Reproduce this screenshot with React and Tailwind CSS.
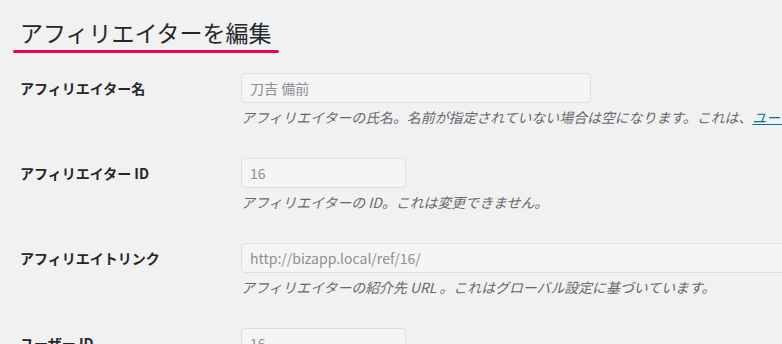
import React from 'react'

const FONT = { fontFamily: '"Noto Sans CJK JP", "Noto Sans", sans-serif' }

const rows = [
  {
    label: 'アフィリエイター名',
    value: '刀吉 備前',
    width: 'w-[350px]',
    desc: (
      <>
        アフィリエイターの氏名。名前が指定されていない場合は空になります。これは、
        <a href="#" className="text-[#0073aa] underline">ユーザー</a>
      </>
    ),
  },
  {
    label: 'アフィリエイター ID',
    value: '16',
    width: 'w-[165px]',
    desc: 'アフィリエイターの ID。これは変更できません。',
  },
  {
    label: 'アフィリエイトリンク',
    value: 'http://bizapp.local/ref/16/',
    width: 'w-[600px]',
    desc: 'アフィリエイターの紹介先 URL 。これはグローバル設定に基づいています。',
  },
  {
    label: 'ユーザー ID',
    value: '16',
    width: 'w-[165px]',
    desc: '',
  },
]

function Row({ label, value, width, desc }) {
  return (
    <div className="flex h-[85px] pt-[15px]">
      <div className="flex h-[30px] w-[221px] shrink-0 items-center text-[14px] font-bold text-[#23282d]">
        {label}
      </div>
      <div className="flex flex-col whitespace-nowrap">
        <div
          className={`flex h-[30px] items-center rounded-[4px] border border-[#dedede] bg-[#f5f5f5] px-2 text-[14px] text-[#8c8f94] ${width}`}
        >
          {value}
        </div>
        {desc ? <p className="mt-[4px] text-[13.9px] italic text-[#646970]">{desc}</p> : null}
      </div>
    </div>
  )
}

export default function App() {
  return (
    <div className="h-[344px] overflow-hidden bg-[#f1f1f1]" style={FONT}>
      <div className="pl-[13px] pt-[17px]">
        <div className="inline-flex flex-col">
          <h1 className="px-[7px] text-[23px] font-normal leading-[30px] text-[#23282d]">
            アフィリエイターを編集
          </h1>
          <div className="mt-[3px] h-[3px] rounded-full bg-[#f5004f]" />
        </div>
      </div>
      <div className="pl-5 pt-[5px]">
        {rows.map((row) => (
          <Row key={row.label} {...row} />
        ))}
      </div>
    </div>
  )
}
